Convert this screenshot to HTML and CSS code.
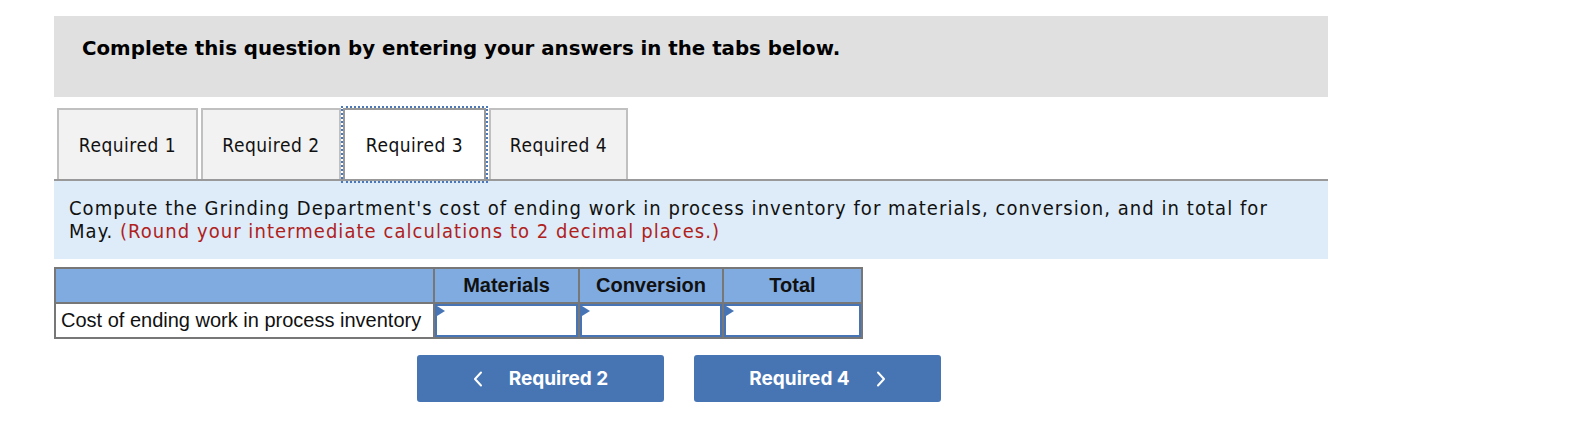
FILE: index.html
```html
<!DOCTYPE html>
<html>
<head>
<meta charset="utf-8">
<link rel="stylesheet" href="styles.css">
</head>
<body>
<div class="wrap">
  <div class="banner">Complete this question by entering your answers in the tabs below.</div>
  <div class="tabs">
    <div class="tab t1">Required 1</div>
    <div class="tab t2">Required 2</div>
    <div class="tab t3 active">Required 3</div>
    <div class="tab t4">Required 4</div>
  </div>
  <div class="panel">
    Compute the Grinding Department's cost of ending work in process inventory for materials, conversion, and in total for May. <span class="note">(Round your intermediate calculations to 2 decimal places.)</span>
  </div>
  <table class="grid">
    <tr class="head">
      <th class="c0"></th>
      <th class="c1">Materials</th>
      <th class="c2">Conversion</th>
      <th class="c3">Total</th>
    </tr>
    <tr class="row">
      <td class="label">Cost of ending work in process inventory</td>
      <td class="inp"><div class="box"><span class="tri"></span></div></td>
      <td class="inp"><div class="box"><span class="tri"></span></div></td>
      <td class="inp"><div class="box"><span class="tri"></span></div></td>
    </tr>
  </table>
  <div class="nav">
    <div class="btn prev">
      <svg class="chev" width="10" height="16" viewBox="0 0 10 16"><path d="M8 1.5 L2 8 L8 14.5" fill="none" stroke="#fff" stroke-width="2" stroke-linecap="round" stroke-linejoin="round"/></svg>
      <span>Required 2</span>
    </div>
    <div class="btn next">
      <span>Required 4</span>
      <svg class="chev" width="10" height="16" viewBox="0 0 10 16"><path d="M2 1.5 L8 8 L2 14.5" fill="none" stroke="#fff" stroke-width="2" stroke-linecap="round" stroke-linejoin="round"/></svg>
    </div>
  </div>
</div>
</body>
</html>
```

FILE: styles.css
```css
html, body {
  margin: 0;
  padding: 0;
  background: #fff;
}
.wrap {
  margin-left: 54px;
  padding-top: 16px;
  width: 1274px;
}
.banner {
  background: #e0e0e0;
  height: 81px;
  box-sizing: border-box;
  padding: 20px 28px 0;
  line-height: 26px;
  font-family: "DejaVu Sans", Verdana, sans-serif;
  font-weight: bold;
  font-size: 19.8px;
  color: #000;
}
.tabs {
  display: flex;
  align-items: flex-end;
  margin-top: 11px;
  padding-left: 3px;
  border-bottom: 2px solid #999;
  height: 71px;
}
.tab {
  box-sizing: border-box;
  height: 71px;
  border: 2px solid #c0c0c0;
  border-bottom: none;
  background: #f2f2f2;
  display: flex;
  align-items: center;
  justify-content: center;
  font-family: "DejaVu Sans Condensed", "DejaVu Sans", Tahoma, sans-serif;
  font-size: 19px;
  letter-spacing: 0.5px;
  color: #111;
}
.t1 { width: 141px; }
.t2 { width: 140px; margin-left: 3px; }
.t3 { width: 143px; margin-left: 2px; }
.t4 { width: 139px; margin-left: 3px; }
.tab.active {
  background: #fff;
  border: 2px solid #999;
  height: 73px;
  margin-bottom: -2px;
  outline: 2px dotted #4a78b8;
  position: relative;
  z-index: 1;
}
.panel {
  background: #ddecf8;
  height: 78px;
  box-sizing: border-box;
  padding: 16px 15px 0;
  line-height: 23px;
  font-family: "DejaVu Sans Condensed", "DejaVu Sans", Tahoma, sans-serif;
  font-size: 20px;
  letter-spacing: 1.05px;
  color: #111;
}
.note {
  color: #b0211d;
}
.grid {
  margin-top: 8px;
  border-collapse: collapse;
  border: 2px solid #777;
  font-family: "Liberation Sans", Arial, sans-serif;
  font-size: 20px;
  color: #111;
}
.grid th, .grid td {
  border: 2px solid #777;
  padding: 0;
}
.head th {
  background: #80abe0;
  height: 33px;
  font-weight: bold;
  text-align: center;
}
.c0 { width: 377px; }
.c1 { width: 143px; }
.c2 { width: 142px; }
.c3 { width: 137px; }
.row td {
  height: 33px;
}
.label {
  padding-left: 5px !important;
  text-align: left;
  white-space: nowrap;
  background: #fff;
}
.inp {
  background: #fff;
}
.box {
  position: relative;
  box-sizing: border-box;
  height: 33px;
  border: 2px solid #4674b5;
  background: #fff;
}
.tri {
  position: absolute;
  left: 0;
  top: 0;
  width: 0;
  height: 0;
  border-top: 5px solid transparent;
  border-bottom: 5px solid transparent;
  border-left: 8px solid #4674b5;
}
.nav {
  display: flex;
  gap: 30px;
  margin-top: 16px;
  margin-left: 363px;
}
.btn {
  width: 247px;
  height: 47px;
  box-sizing: border-box;
  background: #4775b4;
  border-radius: 3px;
  display: flex;
  align-items: center;
  justify-content: center;
  gap: 26px;
  color: #fff;
  font-family: Inter, "Open Sans", sans-serif;
  font-weight: 700;
  font-size: 19px;
}
.chev { display: block; }
```
